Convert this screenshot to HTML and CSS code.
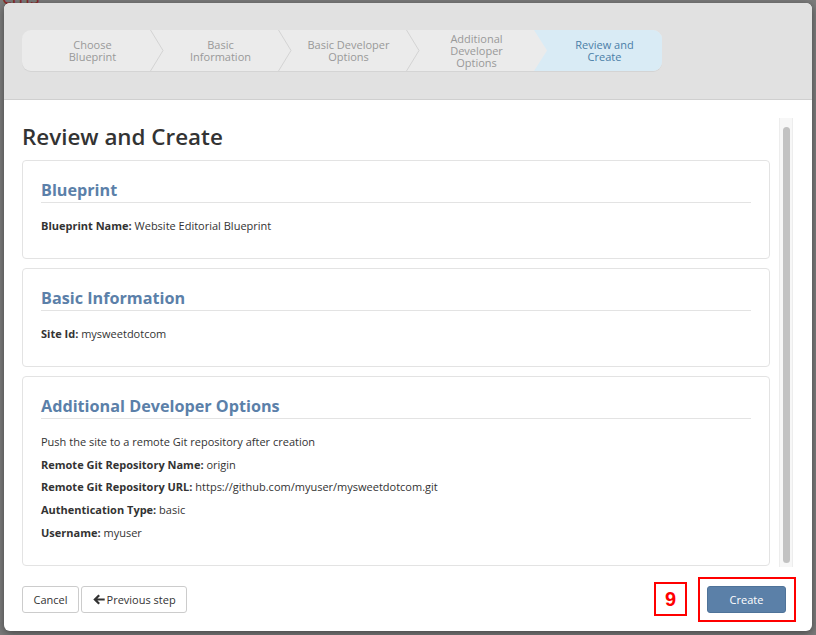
FILE: index.html
```html
<!DOCTYPE html>
<html lang="en">
<head>
<meta charset="utf-8">
<title>Create Site - Review and Create</title>
<link rel="stylesheet" href="styles.css">
</head>
<body>
<div class="backdrop-page">
  <span class="brand">cms</span>
</div>
<div class="modal">
  <div class="modal-header">
    <ol class="steps">
      <li class="step"><span>Choose<br>Blueprint</span><svg class="sep" width="14" height="41" viewBox="0 0 14 41"><polyline points="0.5,0 13,20.5 0.5,41" fill="none" stroke="#d3d3d3" stroke-width="1"/></svg></li>
      <li class="step"><span>Basic<br>Information</span><svg class="sep" width="14" height="41" viewBox="0 0 14 41"><polyline points="0.5,0 13,20.5 0.5,41" fill="none" stroke="#d3d3d3" stroke-width="1"/></svg></li>
      <li class="step"><span>Basic Developer<br>Options</span><svg class="sep" width="14" height="41" viewBox="0 0 14 41"><polyline points="0.5,0 13,20.5 0.5,41" fill="none" stroke="#d3d3d3" stroke-width="1"/></svg></li>
      <li class="step"><span>Additional<br>Developer<br>Options</span></li>
      <li class="step active"><span>Review and<br>Create</span></li>
    </ol>
  </div>
  <div class="modal-body">
    <div class="body-content">
      <h2 class="title">Review and Create</h2>
      <section class="card">
        <h3 class="card-title">Blueprint</h3>
        <p><b>Blueprint Name:</b> Website Editorial Blueprint</p>
      </section>
      <section class="card">
        <h3 class="card-title">Basic Information</h3>
        <p><b>Site Id:</b> mysweetdotcom</p>
      </section>
      <section class="card">
        <h3 class="card-title">Additional Developer Options</h3>
        <p>Push the site to a remote Git repository after creation</p>
        <p><b>Remote Git Repository Name:</b> origin</p>
        <p><b>Remote Git Repository URL:</b> https://github.com/myuser/mysweetdotcom.git</p>
        <p><b>Authentication Type:</b> basic</p>
        <p><b>Username:</b> myuser</p>
      </section>
    </div>
    <div class="scrollbar"><div class="thumb"></div></div>
  </div>
  <div class="modal-footer">
    <div class="footer-left">
      <button class="btn">Cancel</button>
      <button class="btn"><svg class="arrow" width="12" height="11" viewBox="0 0 12 11"><path d="M0.3 5.5 L5.4 0.4 L7 2 L4.4 4.4 H11.7 V6.6 H4.4 L7 9 L5.4 10.6 Z" fill="#333"/></svg>Previous step</button>
    </div>
    <div class="footer-right">
      <span class="anno-num">9</span>
      <span class="anno-box"><button class="btn btn-primary">Create</button></span>
    </div>
  </div>
</div>
</body>
</html>
```
FILE: styles.css
```css
html, body {
  margin: 0;
  padding: 0;
}
body {
  width: 816px;
  height: 635px;
  background: #7b7b7b;
  font-family: "Open Sans", "Liberation Sans", sans-serif;
  color: #333;
  overflow: hidden;
  position: relative;
}
.backdrop-page {
  height: 635px;
  background: #7d7d7d;
}
.brand {
  display: block;
  padding-left: 2px;
  margin-top: -13px;
  font-size: 20px;
  color: #8e2a2a;
  line-height: 20px;
}
.modal {
  position: absolute;
  left: 4px;
  top: 3px;
  width: 808px;
  height: 628px;
  background: #fff;
  border-radius: 6px;
  box-shadow: 0 2px 8px rgba(0, 0, 0, 0.45);
  display: flex;
  flex-direction: column;
  overflow: hidden;
}
.modal-header {
  flex: none;
  box-sizing: border-box;
  height: 97px;
  padding: 27px 18px 0 18px;
  background: #e1e1e1;
  border-bottom: 1px solid #cfcfcf;
}
.steps {
  list-style: none;
  margin: 0;
  padding: 0;
  display: flex;
  width: 640px;
  height: 41px;
  background: #ebebeb;
  border-radius: 9px;
  box-shadow: 0 1px 0 #d4d4d4;
}
.step {
  position: relative;
  width: 128px;
  height: 41px;
  box-sizing: border-box;
  padding-left: 13px;
  display: flex;
  align-items: center;
  justify-content: center;
  text-align: center;
  font-size: 11px;
  line-height: 12px;
  color: #999;
}
.step:first-child {
  border-radius: 9px 0 0 9px;
}
.step.active {
  background: #d9ebf5;
  color: #4a7ea7;
  border-radius: 0 9px 9px 0;
  clip-path: polygon(0 0, 100% 0, 100% 100%, 0 100%, 13px 50%);
}
.sep {
  position: absolute;
  left: 128px;
  top: 0;
  z-index: 2;
}
.modal-body {
  flex: 1;
  min-height: 0;
  display: flex;
  gap: 9px;
  padding: 18px 19px 0 18px;
}
.body-content {
  width: 748px;
  overflow: hidden;
}
.title {
  margin: 6px 0 10px 0;
  font-size: 22.4px;
  line-height: 26px;
  font-weight: 600;
  color: #333;
}
.card {
  border: 1px solid #e3e3e3;
  border-radius: 4px;
  padding: 0 18px 17.5px 18px;
  margin-bottom: 9px;
}
.card-title {
  margin: 19px 0 15px 0;
  padding-bottom: 2px;
  border-bottom: 1px solid #e3e3e3;
  font-size: 16.2px;
  line-height: 20px;
  font-weight: 700;
  color: #5b80a9;
}
.card p {
  margin: 0 0 7px 0;
  font-size: 11px;
  line-height: 15.6px;
  color: #333;
}
.card p b {
  font-weight: 700;
}
.scrollbar {
  width: 14px;
  box-sizing: border-box;
  background: #f7f7f7;
  border-left: 1px solid #ededed;
  border-right: 1px solid #ededed;
  padding: 9px 2px 4px 3px;
  display: flex;
}
.thumb {
  flex: 1;
  background: #c2c2c2;
  border-radius: 4px;
}
.modal-footer {
  flex: none;
  height: 64px;
  box-sizing: border-box;
  padding: 0 16px 0 18px;
  display: flex;
  justify-content: space-between;
  align-items: center;
}
.footer-left {
  display: flex;
  gap: 2px;
}
.btn {
  height: 27px;
  box-sizing: border-box;
  padding: 0 10.5px;
  border: 1px solid #ccc;
  border-radius: 3px;
  background: #fff;
  font-family: "Open Sans", "Liberation Sans", sans-serif;
  font-size: 11px;
  color: #333;
  display: inline-flex;
  align-items: center;
  gap: 2px;
}
.arrow {
  display: block;
}
.footer-right {
  display: flex;
  align-items: center;
  gap: 11px;
}
.anno-num {
  width: 33px;
  height: 34px;
  box-sizing: border-box;
  border: 2px solid #f00;
  color: #f00;
  font-family: "Liberation Sans", Arial, sans-serif;
  font-weight: 700;
  font-size: 20px;
  display: flex;
  align-items: center;
  justify-content: center;
}
.anno-box {
  border: 2px solid #f00;
  padding: 7px 8px 7px 7px;
  display: flex;
}
.btn-primary {
  width: 79px;
  justify-content: center;
  background: #5b80a8;
  border-color: #4f7399;
  color: #fff;
}
```
